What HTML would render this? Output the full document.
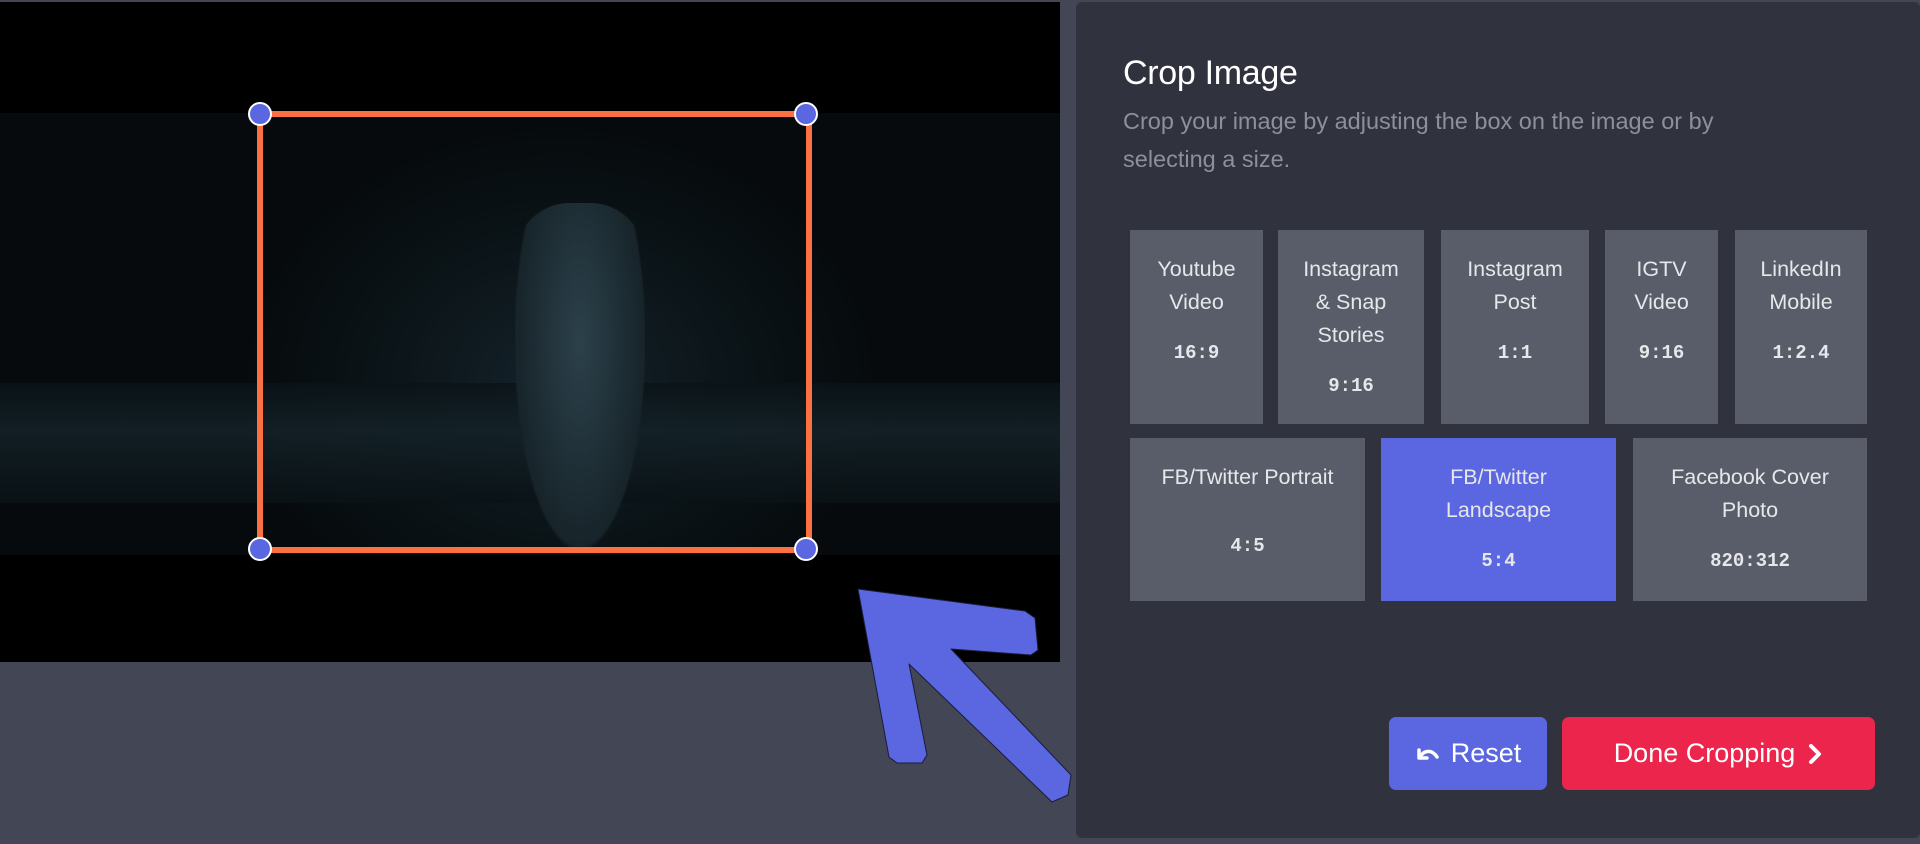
<!DOCTYPE html>
<html><head><meta charset="utf-8">
<style>
*{margin:0;padding:0;box-sizing:border-box}
body{width:1920px;height:844px;overflow:hidden;background:#434654;font-family:"Liberation Sans",sans-serif;position:relative}
.stage{position:absolute;left:0;top:2px;width:1060px;height:660px;background:#000}
.band{position:absolute;left:0;top:111px;width:1060px;height:442px;
background:radial-gradient(ellipse 320px 260px at 560px 270px,#14222a 0%,#0b1418 55%,#060a0c 100%);}
.band .ground{position:absolute;left:0;top:270px;width:1060px;height:120px;background:linear-gradient(#0a1317,#142228 40%,#0a1216);opacity:.85}
.band .fig{position:absolute;left:515px;top:90px;width:130px;height:345px;border-radius:55px 55px 20px 20px;background:radial-gradient(ellipse at 50% 40%,#2c414b,#17242a 70%,transparent 72%)}
.crop{position:absolute;left:257px;top:111px;width:555px;height:442px;border:6px solid #fc7142}
.h{position:absolute;width:24px;height:24px;border-radius:50%;background:#5a67e0;border:2px solid #fff}
.panel{position:absolute;left:1076px;top:2px;width:844px;height:836px;background:#30333e;border-radius:6px}
h1{position:absolute;left:47px;top:52px;color:#fff;font-size:34px;font-weight:normal;letter-spacing:-.3px}
.sub{position:absolute;left:47px;top:100px;width:660px;color:#8d909b;font-size:23.5px;line-height:38px}
.t{position:absolute;background:#595d6a;color:#e6e7ea;font-size:21.5px;line-height:33px;text-align:center;padding-top:23px}
.t b{display:block;font-family:"Liberation Mono",monospace;font-size:19px;margin-top:18px}
.sel{background:#5a67e0}
.btn{position:absolute;border-radius:7px;color:#fff;font-size:27px;display:flex;align-items:center;justify-content:center}
</style></head><body>
<div class="stage">
 <div class="band"><div class="ground"></div><div class="fig"></div></div>
</div>
<div class="crop"></div>
<div class="h" style="left:248px;top:102px"></div>
<div class="h" style="left:794px;top:102px"></div>
<div class="h" style="left:248px;top:537px"></div>
<div class="h" style="left:794px;top:537px"></div>
<svg style="position:absolute;left:0;top:0" width="1100" height="844">
<polygon points="858,589 1025,611 1035,618 1038,650 1031,655 951,649 1071,775 1068,795 1052,802 909,664 927,755 922,763 897,763 889,757" fill="#5a67e0" stroke="#1a1c3a" stroke-width="1" stroke-linejoin="round"/>
</svg>
<div class="panel">
 <h1>Crop Image</h1>
 <div class="sub">Crop your image by adjusting the box on the image or by selecting a size.</div>
 <div class="t" style="left:54px;top:228px;width:133px;height:194px">Youtube<br>Video<b>16:9</b></div>
 <div class="t" style="left:202px;top:228px;width:146px;height:194px">Instagram<br>&amp; Snap<br>Stories<b>9:16</b></div>
 <div class="t" style="left:365px;top:228px;width:148px;height:194px">Instagram<br>Post<b>1:1</b></div>
 <div class="t" style="left:529px;top:228px;width:113px;height:194px">IGTV<br>Video<b>9:16</b></div>
 <div class="t" style="left:659px;top:228px;width:132px;height:194px">LinkedIn<br>Mobile<b>1:2.4</b></div>
 <div class="t" style="left:54px;top:436px;width:235px;height:163px">FB/Twitter Portrait<b style="margin-top:36px">4:5</b></div>
 <div class="t sel" style="left:305px;top:436px;width:235px;height:163px">FB/Twitter<br>Landscape<b>5:4</b></div>
 <div class="t" style="left:557px;top:436px;width:234px;height:163px">Facebook Cover<br>Photo<b>820:312</b></div>
 <div class="btn" style="left:313px;top:715px;width:158px;height:73px;background:#5a67e0">
  <svg width="26" height="20" viewBox="0 0 26 20" style="margin-right:10px"><path d="M4 6 L4 14 L12 14 M5 13 C9 6 17 5 22 13" fill="none" stroke="#fff" stroke-width="3.5" stroke-linecap="round" stroke-linejoin="round"/></svg>Reset</div>
 <div class="btn" style="left:486px;top:715px;width:313px;height:73px;background:#ec254d">Done Cropping
  <svg width="16" height="22" viewBox="0 0 16 22" style="margin-left:12px"><path d="M4 3 L12 11 L4 19" fill="none" stroke="#fff" stroke-width="4" stroke-linecap="round" stroke-linejoin="round"/></svg></div>
</div>
</body></html>
